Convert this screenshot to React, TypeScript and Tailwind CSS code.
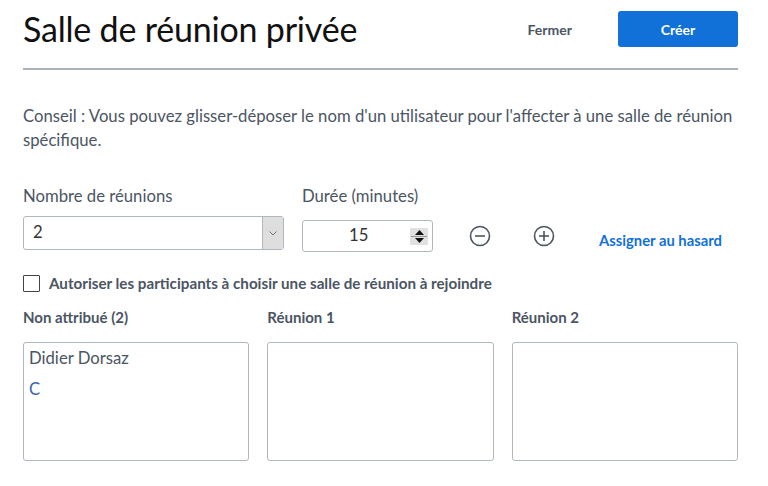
import React from 'react';

const font = { fontFamily: 'Lato, "Open Sans", sans-serif' };

function CircleIcon({ plus }: { plus?: boolean }) {
  return (
    <svg width="22" height="22" viewBox="0 0 22 22" fill="none" stroke="#4b5563" strokeWidth="1.6">
      <circle cx="11" cy="11" r="9.5" />
      <line x1="6" y1="11" x2="16" y2="11" />
      {plus && <line x1="11" y1="6" x2="11" y2="16" />}
    </svg>
  );
}

export default function App() {
  const rooms = ['Non attribué (2)', 'Réunion 1', 'Réunion 2'];

  return (
    <div className="w-[768px] h-[486px] bg-white text-[#4b5563] overflow-hidden" style={font}>
      <div className="pl-[23px] pr-[30px] pt-[11px]">
        {/* Header */}
        <div className="flex items-center h-[36px]">
          <h1 className="text-[34px] text-[#111] leading-none flex-1 tracking-[-0.2px]">Salle de réunion privée</h1>
          <button className="text-[14px] font-bold text-[#4b5563] mr-[46px]">Fermer</button>
          <button className="w-[120px] h-[36px] rounded-[3px] bg-[#1171d9] text-white text-[14px] font-bold">Créer</button>
        </div>
        <div className="mt-[21px] h-[2px] bg-[#a9b1b9]" />

        {/* Tip */}
        <p className="mt-[34px] text-[16.7px] leading-[24px] text-[#4b5563]">
          Conseil : Vous pouvez glisser-déposer le nom d'un utilisateur pour l'affecter à une salle de réunion spécifique.
        </p>

        {/* Controls */}
        <div className="mt-[32px] flex">
          <div className="w-[261px]">
            <div className="text-[16.7px] leading-[24px]">Nombre de réunions</div>
            <div className="mt-[8px] h-[34px] border border-[#b0b7bf] rounded-[3px] flex">
              <div className="flex-1 pl-[9px] flex items-center text-[16.7px] text-[#333]">2</div>
              <div className="w-[21px] bg-[#dedede] border-l border-[#b0b7bf] flex items-center justify-center">
                <svg width="8" height="5" viewBox="0 0 8 5" fill="none" stroke="#666" strokeWidth="0.9">
                  <path d="M0.5 0.5 L4 4 L7.5 0.5" />
                </svg>
              </div>
            </div>
          </div>
          <div className="ml-[18px]">
            <div className="text-[16.7px] leading-[24px]">Durée (minutes)</div>
            <div className="flex items-center mt-[12px]">
              <div className="w-[131px] h-[32px] border border-[#b0b7bf] rounded-[3px] flex items-center relative">
                <span className="absolute left-[46px] text-[16.7px] text-[#333]">15</span>
                <div className="absolute right-[4px] top-[7px] w-[18px] h-[17px] bg-[#e1e1e1] flex flex-col items-center justify-center gap-[1px]">
                  <svg width="9" height="5" viewBox="0 0 9 5"><path d="M0 5 L4.5 0 L9 5 Z" fill="#111" /></svg>
                  <div className="w-[16px] h-[1px] bg-[#999]" />
                  <svg width="9" height="5" viewBox="0 0 9 5"><path d="M0 0 L4.5 5 L9 0 Z" fill="#111" /></svg>
                </div>
              </div>
              <div className="ml-[36px]"><CircleIcon /></div>
              <div className="ml-[42px]"><CircleIcon plus /></div>
              <a className="ml-[44px] mt-[8px] text-[14.8px] font-bold text-[#1171d9]">Assigner au hasard</a>
            </div>
          </div>
        </div>

        {/* Checkbox */}
        <label className="mt-[20px] flex items-center">
          <span className="w-[17px] h-[17px] border border-[#444] rounded-[1px]" />
          <span className="ml-[9px] text-[15.2px] font-bold text-[#4b5563]">Autoriser les participants à choisir une salle de réunion à rejoindre</span>
        </label>

        {/* Rooms */}
        <div className="mt-[12px] grid grid-cols-3 gap-x-[18px]">
          {rooms.map((r, i) => (
            <div key={r}>
              <div className="text-[15px] font-bold leading-[20px]">{r}</div>
              <div className="mt-[15px] h-[119px] border border-[#b0b7bf] rounded-[3px] px-[5px] pt-[4px]">
                {i === 0 && (
                  <>
                    <div className="text-[16.7px] leading-[22px] text-[#4b5563]">Didier Dorsaz</div>
                    <div className="mt-[9px] text-[16.7px] leading-[22px] text-[#3b62a8]">C</div>
                  </>
                )}
              </div>
            </div>
          ))}
        </div>
      </div>
    </div>
  );
}
